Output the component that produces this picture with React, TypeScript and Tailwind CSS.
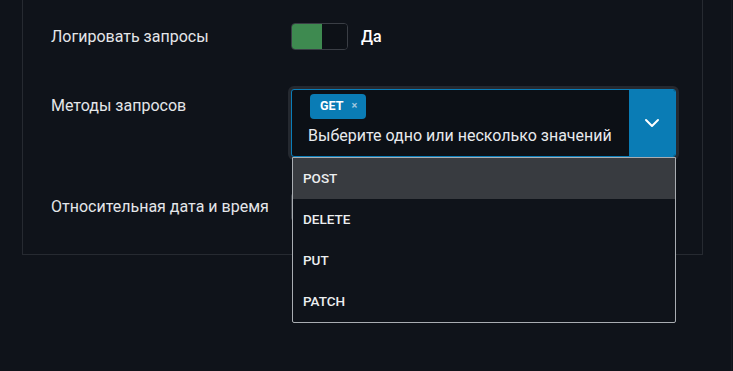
import React from "react";

export default function App() {
  const items = ["POST", "DELETE", "PUT", "PATCH"];
  return (
    <div
      className="relative w-[733px] h-[371px] overflow-hidden bg-[#0f131a] text-[#e4e6e9]"
      style={{ fontFamily: "Roboto, 'Liberation Sans', sans-serif" }}
    >
      <div className="pl-[22px] w-[732px] pr-[28px] border-r border-[#171b22] h-full">
        <div className="relative h-[255px] border-x border-b border-[#262a31] pl-[28px] pr-[20px] pt-[23px]">
          {/* Row 1 */}
          <div className="flex items-center h-[27px]">
            <div className="w-[240px] shrink-0 text-[16px]">Логировать запросы</div>
            <div className="flex h-[27px] w-[57px] shrink-0 rounded-[4px] border border-[#3a3e45] overflow-hidden">
              <div className="w-[30px] bg-[#3e8a50]" />
              <div className="flex-1 bg-[#0d1117]" />
            </div>
            <div className="ml-[13px] text-[16px] font-medium text-white">Да</div>
          </div>

          {/* Row 2 */}
          <div className="flex mt-[36px]">
            <div className="w-[237px] shrink-0 pt-[8px] text-[16px]">Методы запросов</div>
            <div className="shrink-0 rounded-[6px] bg-[#252930] p-[3px]">
              <div className="flex w-[385px] h-[68px] rounded-[3px] border border-[#0a7db8] bg-[#0c1016] overflow-hidden">
                <div className="flex-1 pl-[18px] pt-[3px]">
                  <div className="inline-flex items-center h-[25px] rounded-[4px] bg-[#0a7cb5] pl-[10px] pr-[9px] text-[12.5px] font-bold text-white">
                    GET
                    <span className="ml-[8px] text-[11px] font-bold text-[#9fc6dd]">×</span>
                  </div>
                  <div className="mt-[5px] -ml-[2px] text-[16px] text-[#e8eaed] whitespace-nowrap">
                    Выберите одно или несколько значений
                  </div>
                </div>
                <div className="w-[46px] bg-[#0a7cb5] flex items-center justify-center">
                  <svg width="16" height="10" viewBox="0 0 16 10" fill="none">
                    <path d="M2 2l6 6 6-6" stroke="white" strokeWidth="2" strokeLinecap="round" strokeLinejoin="round" />
                  </svg>
                </div>
              </div>
            </div>
          </div>

          {/* Row 3 */}
          <div className="flex items-center mt-[33px] h-[28px]">
            <div className="w-[240px] shrink-0 text-[16px]">Относительная дата и время</div>
            <div className="h-[28px] w-[385px] shrink-0 rounded-[3px] border border-[#3a3e45] bg-[#0c1016]" />
          </div>

          {/* Dropdown */}
          <div className="absolute left-[269px] top-[157px] w-[384px] h-[166px] border border-[#a9adb2] rounded-b-[2px] bg-[#0f131a] z-10">
            {items.map((it, i) => (
              <div
                key={it}
                className={`flex items-center h-[41px] pl-[10px] text-[13.5px] font-medium text-[#eceef0] ${
                  i === 0 ? "bg-[#383b40]" : ""
                }`}
              >
                {it}
              </div>
            ))}
          </div>
        </div>
      </div>
    </div>
  );
}
